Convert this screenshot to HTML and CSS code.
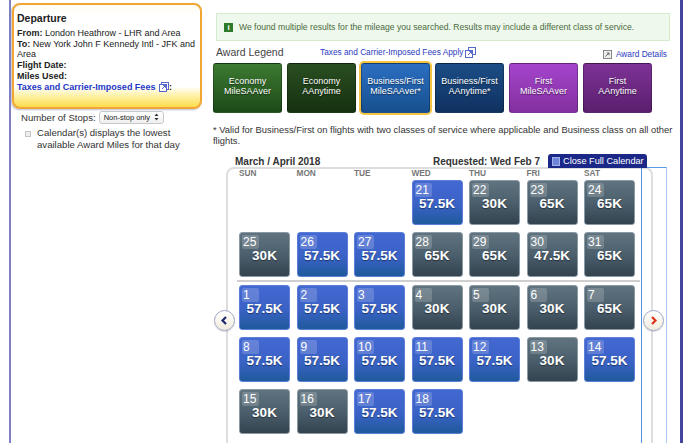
FILE: index.html
```html
<!DOCTYPE html>
<html lang="en">
<head>
    <meta charset="UTF-8">
    <meta name="viewport" content="width=device-width, initial-scale=1.0">
    <title>Award Calendar</title>
    <link rel="stylesheet" href="styles.css">
</head>
<body>

<div class="frame">

    <!-- left column: trip summary -->
    <aside class="sidebar">
        <div class="trip">
            <h2>Departure</h2>
            <p><b>From:</b> London Heathrow - LHR and Area</p>
            <p><b>To:</b> New York John F Kennedy Intl - JFK and<br>Area</p>
            <p><b>Flight Date:</b></p>
            <p><b>Miles Used:</b></p>
            <p><a href="#" class="fees-link">Taxes and Carrier-Imposed Fees</a>
                <svg class="ext" width="10" height="10" viewBox="0 0 10 10"><rect x="2.5" y="0.5" width="7" height="7" fill="#fff" stroke="#5566cc"/><rect x="0.5" y="2.5" width="7" height="7" fill="#fff" stroke="#5566cc"/><path d="M3 7 L6.5 3.5 M4.2 3.5 H6.5 V5.8" stroke="#5566cc" fill="none"/></svg><b>:</b></p>
        </div>

        <div class="stops">
            Number of Stops:
            <span class="select">Non-stop only
                <svg width="5" height="8" viewBox="0 0 5 8"><path d="M0.5 3 L2.5 0.5 L4.5 3 Z M0.5 5 L2.5 7.5 L4.5 5 Z" fill="#333"/></svg>
            </span>
        </div>

        <div class="note">
            <span class="box"></span>
            <p>Calendar(s) displays the lowest available Award Miles for that day</p>
        </div>
    </aside>

    <!-- right column: results -->
    <main class="results">
        <div class="notice">
            <span class="info-icon">i</span>
            We found multiple results for the mileage you searched. Results may include a different class of service.
        </div>

        <div class="legend-head">
            <span class="legend-title">Award Legend</span>
            <a href="#" class="fees">Taxes and Carrier-Imposed Fees Apply
                <svg width="11" height="11" viewBox="0 0 11 11"><rect x="3.5" y="0.5" width="7" height="7" fill="#fff" stroke="#5566cc"/><rect x="0.5" y="3.5" width="7" height="7" fill="#fff" stroke="#5566cc"/><path d="M3 8 L6.5 4.5 M4.2 4.5 H6.5 V6.8" stroke="#5566cc" fill="none"/></svg>
            </a>
            <a href="#" class="details">
                <svg width="9" height="9" viewBox="0 0 9 9"><rect x="0.5" y="0.5" width="8" height="8" fill="#eee" stroke="#888"/><path d="M2.5 6.5 L6 3 M3.8 3 H6 V5.2" stroke="#666" fill="none"/></svg>
                Award Details
            </a>
        </div>

        <div class="legend">
            <div class="award eco-saver">Economy<br>MileSAAver</div>
            <div class="award eco-any">Economy<br>AAnytime</div>
            <div class="award biz-saver selected">Business/First<br>MileSAAver*</div>
            <div class="award biz-any">Business/First<br>AAnytime*</div>
            <div class="award first-saver">First<br>MileSAAver</div>
            <div class="award first-any">First<br>AAnytime</div>
        </div>

        <p class="footnote">* Valid for Business/First on flights with two classes of service where applicable and Business class on all other flights.</p>

        <div class="cal-head">
            <span class="month">March / April 2018</span>
            <span class="requested">Requested: Wed Feb 7</span>
            <a href="#" class="close-tab"><span class="sq"></span>Close Full Calendar</a>
        </div>

        <div class="calendar">
            <div class="days">
                <span>SUN</span><span>MON</span><span>TUE</span><span>WED</span><span>THU</span><span>FRI</span><span>SAT</span>
            </div>

            <!-- March -->
            <div class="grid">
                <span></span><span></span><span></span>
                <div class="day saver"><span class="num">21</span><span class="miles">57.5K</span></div>
                <div class="day other"><span class="num">22</span><span class="miles">30K</span></div>
                <div class="day other"><span class="num">23</span><span class="miles">65K</span></div>
                <div class="day other"><span class="num">24</span><span class="miles">65K</span></div>

                <div class="day other"><span class="num">25</span><span class="miles">30K</span></div>
                <div class="day saver"><span class="num">26</span><span class="miles">57.5K</span></div>
                <div class="day saver"><span class="num">27</span><span class="miles">57.5K</span></div>
                <div class="day other"><span class="num">28</span><span class="miles">65K</span></div>
                <div class="day other"><span class="num">29</span><span class="miles">65K</span></div>
                <div class="day other"><span class="num">30</span><span class="miles">47.5K</span></div>
                <div class="day other"><span class="num">31</span><span class="miles">65K</span></div>
            </div>

            <div class="month-line"></div>

            <!-- April -->
            <div class="grid">
                <div class="day saver"><span class="num">1</span><span class="miles">57.5K</span></div>
                <div class="day saver"><span class="num">2</span><span class="miles">57.5K</span></div>
                <div class="day saver"><span class="num">3</span><span class="miles">57.5K</span></div>
                <div class="day other"><span class="num">4</span><span class="miles">30K</span></div>
                <div class="day other"><span class="num">5</span><span class="miles">30K</span></div>
                <div class="day other"><span class="num">6</span><span class="miles">30K</span></div>
                <div class="day other"><span class="num">7</span><span class="miles">65K</span></div>

                <div class="day saver"><span class="num">8</span><span class="miles">57.5K</span></div>
                <div class="day saver"><span class="num">9</span><span class="miles">57.5K</span></div>
                <div class="day saver"><span class="num">10</span><span class="miles">57.5K</span></div>
                <div class="day saver"><span class="num">11</span><span class="miles">57.5K</span></div>
                <div class="day saver"><span class="num">12</span><span class="miles">57.5K</span></div>
                <div class="day other"><span class="num">13</span><span class="miles">30K</span></div>
                <div class="day saver"><span class="num">14</span><span class="miles">57.5K</span></div>

                <div class="day other"><span class="num">15</span><span class="miles">30K</span></div>
                <div class="day other"><span class="num">16</span><span class="miles">30K</span></div>
                <div class="day saver"><span class="num">17</span><span class="miles">57.5K</span></div>
                <div class="day saver"><span class="num">18</span><span class="miles">57.5K</span></div>
            </div>

            <!-- previous / next month arrows -->
            <button class="nav prev">
                <svg width="9" height="9" viewBox="0 0 9 9"><path d="M6 1 L2.5 4.5 L6 8" stroke="#1d2a6e" stroke-width="2.2" fill="none"/></svg>
            </button>
            <div class="next-col">
                <button class="nav next">
                    <svg width="9" height="9" viewBox="0 0 9 9"><path d="M3 1 L6.5 4.5 L3 8" stroke="#e0341a" stroke-width="2.2" fill="none"/></svg>
                </button>
            </div>
        </div>
    </main>

</div>

</body>
</html>
```

FILE: styles.css
```css
/* General styling */
body {
    margin: 0;
    font-family: 'Liberation Sans', Arial, Helvetica, sans-serif;
    color: #333;
    background: #fff;
}

a {
    text-decoration: none;
}

/* page frame with the two purple side rules */
.frame {
    display: flex;
    margin-left: 9px;
    width: 674px;
    height: 443px;
    box-sizing: border-box;
    border-left: 2px solid #8080c4;
    border-right: 3px solid #45459e;
    overflow: hidden;
}

/* Sidebar */
.sidebar {
    width: 190px;
    padding-left: 1px;
    flex-shrink: 0;
}

.trip {
    margin-top: 3px;
    padding: 7px 2px 14px 3px;
    border: 2px solid #f0a535;
    border-radius: 8px;
    background: linear-gradient(to bottom, #fffdf3 0, #ffffff 12%, #ffffff 80%, #fff3b0 88%, #fcdc4a 100%);
    box-shadow: -1px 1px 2px rgba(60, 70, 140, 0.35);
    font-size: 9px;
    color: #222;
}

.trip h2 {
    margin: 0;
    font-size: 10.5px;
    line-height: 13px;
}

.trip p {
    margin: 0.5px 0 0;
    line-height: 10.5px;
}

.trip h2 + p {
    margin-top: 2.5px;
}

.fees-link {
    color: #2438c8;
    font-weight: bold;
}

.ext {
    vertical-align: -2px;
    margin-left: 1px;
}

.stops {
    display: flex;
    align-items: center;
    gap: 3px;
    margin: 2px 0 0 9px;
    font-size: 9.6px;
    color: #333;
}

.select {
    display: inline-flex;
    align-items: center;
    gap: 4px;
    height: 11px;
    padding: 0 4px;
    border: 1px solid #c8c8c8;
    border-radius: 3px;
    background: linear-gradient(#fff, #f0f0f0);
    font-size: 7.5px;
    color: #222;
}

.note {
    display: flex;
    gap: 6px;
    margin: 3px 0 0 13px;
    font-size: 9.6px;
    color: #333;
}

.note .box {
    width: 4px;
    height: 4px;
    margin-top: 4px;
    border: 1px solid #c4c4c4;
    background: #eee;
}

.note p {
    margin: 0;
    width: 165px;
    line-height: 12px;
}

/* Main results column */
.results {
    margin-left: 11px;
    padding-top: 13px;
    width: 460px;
}

.notice {
    display: flex;
    align-items: center;
    gap: 6px;
    margin-left: 3px;
    width: 454px;
    height: 28px;
    box-sizing: border-box;
    padding-left: 7px;
    background: #eef8ec;
    border: 1px solid #d4ebcc;
    font-size: 8.6px;
    color: #4a6a40;
}

.info-icon {
    width: 9px;
    height: 9px;
    background: #2f7a2a;
    color: #fff;
    font-size: 8px;
    font-weight: bold;
    line-height: 9px;
    text-align: center;
}

.legend-head {
    display: flex;
    align-items: center;
    height: 22px;
    padding-left: 3px;
}

.legend-title {
    width: 104px;
    font-size: 10.5px;
    color: #444;
}

.fees {
    display: flex;
    align-items: center;
    gap: 2px;
    font-size: 8.3px;
    color: #2c3cc0;
}

.details {
    display: flex;
    align-items: center;
    gap: 4px;
    margin-left: auto;
    margin-right: 6px;
    margin-top: 4px;
    font-size: 8.3px;
    color: #2c3cc0;
}

/* award legend buttons */
.legend {
    display: flex;
    gap: 5px;
}

.award {
    width: 69px;
    height: 50px;
    box-sizing: border-box;
    padding-top: 12px;
    border-radius: 3px;
    border: 1px solid rgba(0, 0, 0, 0.25);
    color: #fff;
    font-size: 9px;
    line-height: 10px;
    text-align: center;
    text-shadow: 0 1px 1px rgba(0, 0, 0, 0.5);
}

.eco-saver {
    background: linear-gradient(#3d7a32, #1d4a18);
}

.eco-any {
    background: linear-gradient(#2a4e22, #15310f);
}

.biz-saver {
    background: linear-gradient(#2b6ec2, #17508f);
}

.selected {
    box-shadow: 0 0 0 2px #f4c542;
}

.biz-any {
    background: linear-gradient(#1c4d86, #0f3160);
}

.first-saver {
    background: linear-gradient(#a444cc, #84309f);
}

.first-any {
    background: linear-gradient(#7d3296, #5a1f6e);
}

.footnote {
    margin: 11px 0 0;
    width: 462px;
    font-size: 9.4px;
    line-height: 11px;
    color: #333;
}

/* calendar header */
.cal-head {
    display: flex;
    align-items: center;
    margin: 8px 0 0 13px;
    width: 427px;
    height: 14px;
    margin-bottom: -1px;
    font-size: 10px;
    font-weight: bold;
    color: #333;
}

.month {
    flex: 1;
    padding-left: 9px;
}

.requested {
    margin-right: 8px;
}

.close-tab {
    display: flex;
    align-items: center;
    gap: 3px;
    width: 99px;
    height: 14px;
    box-sizing: border-box;
    padding-left: 4px;
    margin-right: 6px;
    background: #1c2888;
    border-radius: 3px 3px 0 0;
    color: #fff;
    font-weight: normal;
    font-size: 9.2px;
    white-space: nowrap;
    position: relative;
    z-index: 1;
}

.close-tab .sq {
    width: 6px;
    height: 7px;
    flex-shrink: 0;
    background: #6f86d8;
    border: 1px solid #9fb2ee;
}

/* calendar body */
.calendar {
    position: relative;
    margin-left: 13px;
    width: 427px;
    height: 300px;
    box-sizing: border-box;
    border: 2px solid #dedede;
    border-bottom: none;
    border-radius: 8px 8px 0 0;
}

.days,
.grid {
    display: grid;
    grid-template-columns: repeat(7, 51px);
    column-gap: 6.5px;
    padding-left: 11px;
}

.days {
    height: 9px;
    font-size: 8.3px;
    font-weight: bold;
    line-height: 9px;
    color: #777;
}

.grid {
    grid-auto-rows: 45px;
    row-gap: 7px;
    margin-top: 2px;
}

.month-line {
    margin: 3px 0 0 9px;
    width: 403px;
    height: 2px;
    background: #cfcfcf;
}

.month-line + .grid {
    margin-top: 3px;
}

.day {
    position: relative;
    box-sizing: border-box;
    border-radius: 3px;
    color: #fff;
    text-align: center;
}

.saver {
    background: linear-gradient(#4468d2 0, #3a62c6 55%, #1f5a9c 100%);
    border: 1px solid #5d7fd8;
}

.other {
    background: linear-gradient(#5f7480 0, #4c5f6c 50%, #334350 100%);
    border: 1px solid #8b99a3;
}

.num {
    position: absolute;
    left: 2px;
    top: 2px;
    min-width: 15px;
    height: 14px;
    padding: 0 1px;
    border-radius: 2px;
    background: rgba(255, 255, 255, 0.18);
    font-size: 12px;
    line-height: 14px;
    text-align: left;
}

.miles {
    display: block;
    padding-top: 16px;
    font-size: 13.5px;
    font-weight: bold;
    line-height: 14px;
    text-shadow: 0 1px 1px rgba(0, 0, 0, 0.45);
}

/* month arrows */
.nav {
    display: flex;
    align-items: center;
    justify-content: center;
    width: 21px;
    height: 21px;
    padding: 0;
    border: 1px solid #a0a6c8;
    border-radius: 50%;
    background: linear-gradient(#ffffff, #f1ecdc);
    box-shadow: 0 1px 1px rgba(0, 0, 0, 0.15);
}

.prev {
    position: absolute;
    left: -14px;
    top: 141px;
}

.next-col {
    position: absolute;
    left: 413px;
    top: -2px;
    width: 26px;
    height: 300px;
    box-sizing: border-box;
    border-top: 1px solid #5b9ae6;
    border-left: 1px solid #4f92e4;
    border-right: 1px solid #a9c8f2;
}

.next {
    margin: 142px 0 0 1px;
}
```
